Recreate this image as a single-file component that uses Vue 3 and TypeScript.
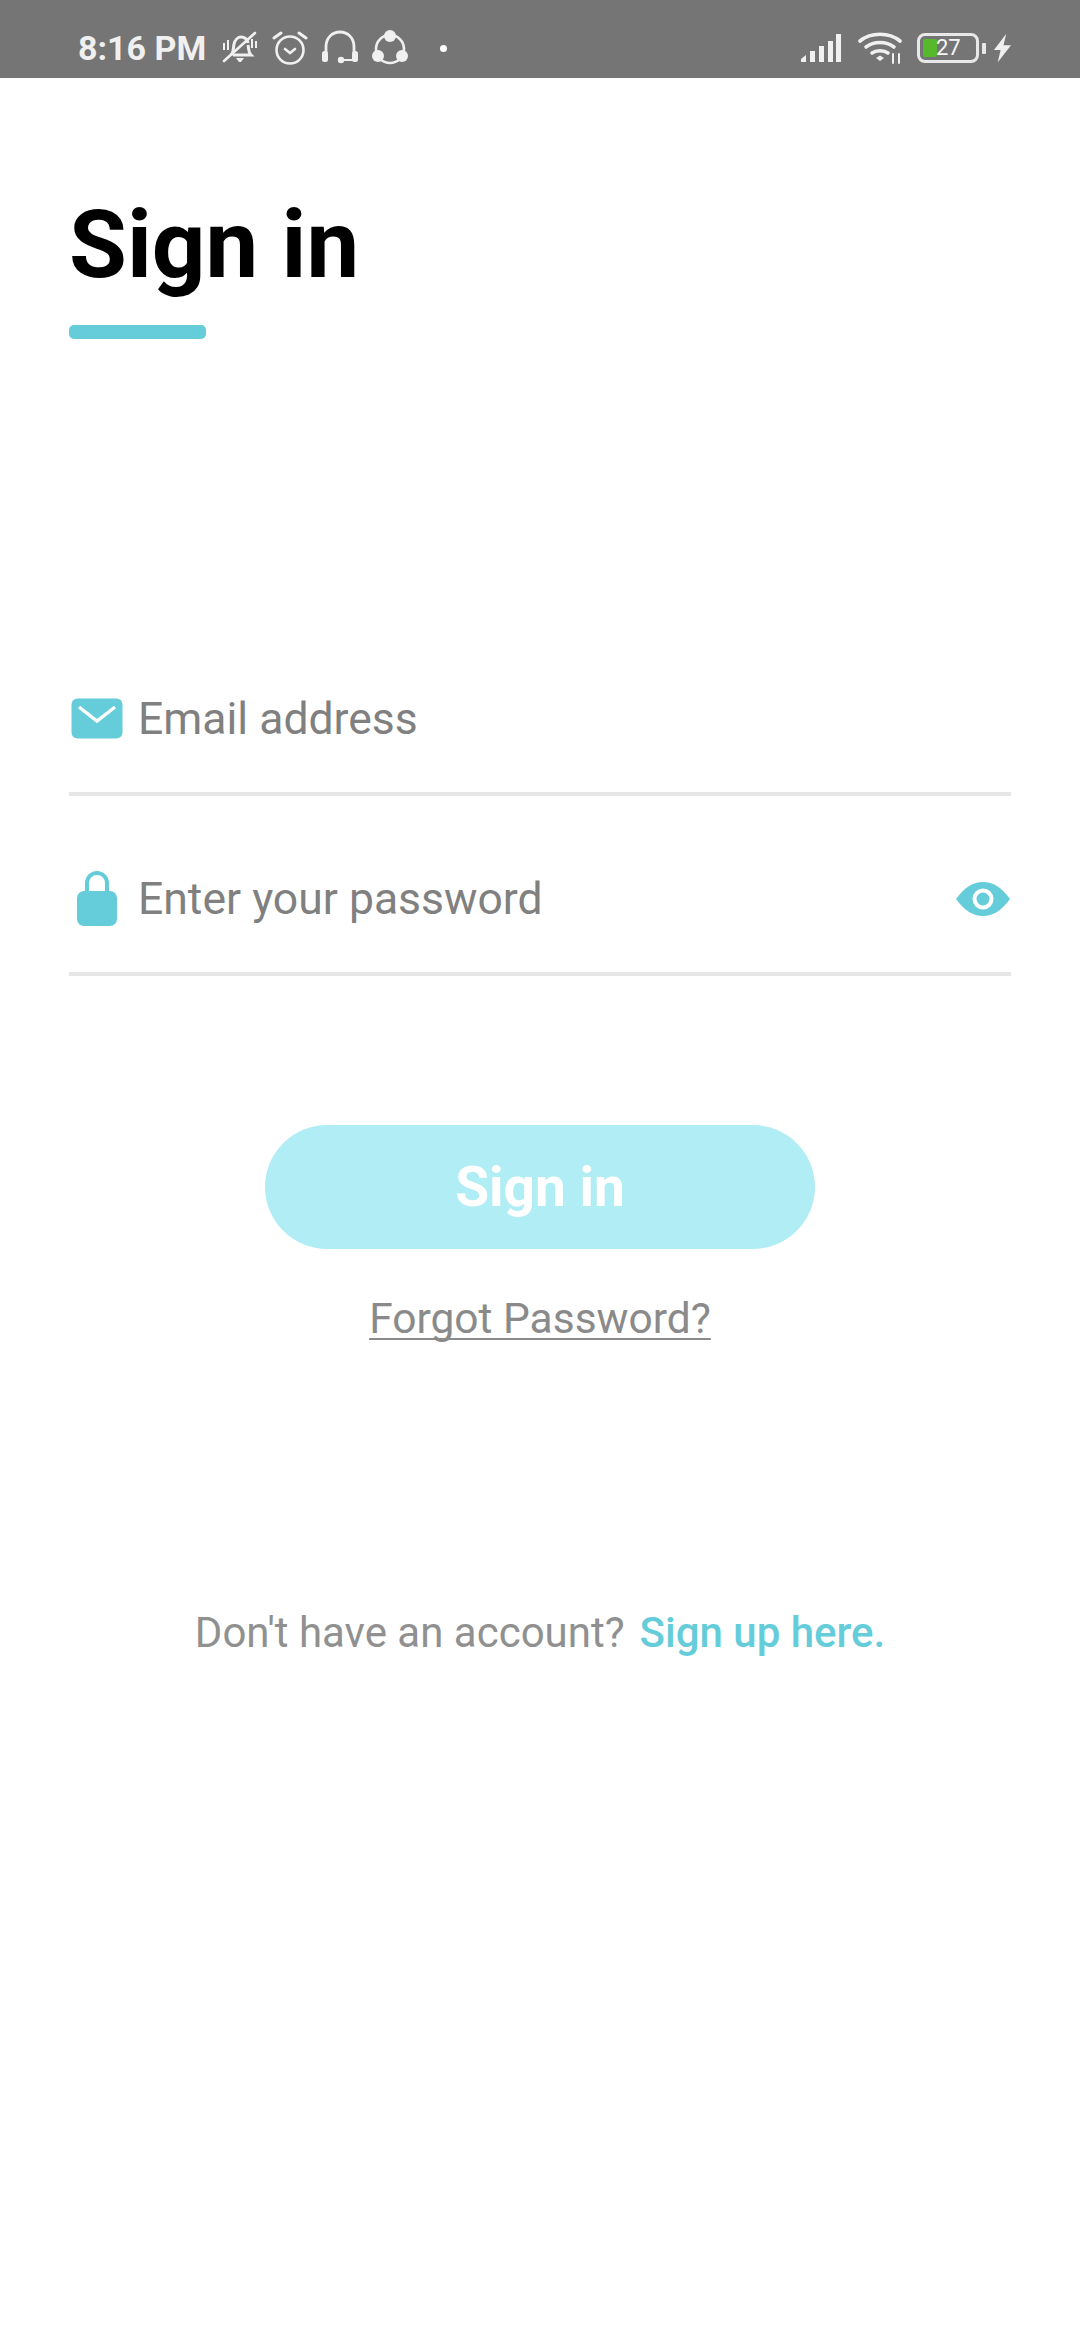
<template>
  <div class="screen">
    <header class="status-bar">
      <div class="status-left">
        <span class="time">8:16 PM</span>
        <svg class="st bell" viewBox="0 0 36 36" fill="none" stroke="#f0f0f0">
          <path d="M9 25c3-3 2-6 3-11 1-4 4-7 7-7s6 2 7 6M26 15c1 4 0 7 3 10H11" stroke-width="3" />
          <path d="M2 31 33 3" stroke-width="2.6" stroke-linecap="round" />
          <path d="M14 28h8l-3 4h-2z" fill="#f0f0f0" stroke="none" />
          <path d="M2 13v7M6 10v10M34 11v7M30 9v9" stroke-width="2" />
        </svg>
        <svg class="st alarm" viewBox="0 0 36 36" fill="none" stroke="#f0f0f0" stroke-width="2.6" stroke-linecap="round">
          <circle cx="18" cy="20" r="13.5" />
          <path d="M2 8l7-5M34 8l-7-5" stroke-width="3" />
          <path d="M13 19l5 4 5-4" />
        </svg>
        <svg class="st headset" viewBox="0 0 36 36" fill="none" stroke="#f0f0f0" stroke-width="2.8" stroke-linecap="round">
          <path d="M4 22V17C4 8 10 2 18 2s14 6 14 15v5" />
          <rect x="0" y="21" width="6" height="11" rx="2.5" fill="#f0f0f0" stroke="none" />
          <rect x="30" y="21" width="6" height="11" rx="2.5" fill="#f0f0f0" stroke="none" />
          <path d="M20 30h11" stroke-width="2" />
          <circle cx="19" cy="30" r="3.2" fill="#f0f0f0" stroke="none" />
        </svg>
        <svg class="st share" viewBox="0 0 36 36" fill="none" stroke="#f0f0f0" stroke-width="2.6">
          <circle cx="18" cy="19" r="14" />
          <circle cx="18" cy="6" r="6" fill="#f0f0f0" stroke="none" />
          <circle cx="6" cy="26" r="6" fill="#f0f0f0" stroke="none" />
          <circle cx="30" cy="26" r="6" fill="#f0f0f0" stroke="none" />
        </svg>
        <span class="dot"></span>
      </div>
      <div class="status-right">
        <svg class="signal" viewBox="0 0 42 30" fill="#f0f0f0">
          <path d="M1 26l5-4v7H1zM10 18h5v11h-5zM19 13h5v16h-5zM28 8h5v21h-5zM36 1h5v28h-5z" />
        </svg>
        <svg class="wifi" viewBox="0 0 44 32" fill="none" stroke="#f0f0f0" stroke-linecap="round">
          <path d="M2 9c11-9 29-9 40 0" stroke-width="3.6" />
          <path d="M8 15c8-6 20-6 28 0" stroke-width="3.6" />
          <path d="M14 21c4-3 12-3 16 0" stroke-width="3.6" />
          <path d="M18 26l4-2.5 4 2.5-4 3z" fill="#f0f0f0" stroke="none" />
          <path d="M35 22v9M41 22v9" stroke-width="2" />
        </svg>
        <div class="battery">
          <span class="battery-fill"></span>
          <span class="battery-num">27</span>
        </div>
        <span class="battery-tip"></span>
        <svg class="bolt" viewBox="0 0 20 30" fill="#f0f0f0">
          <path d="M14 0 1 17h7L5 30l14-18h-8z" />
        </svg>
      </div>
    </header>

    <main class="content">
      <h1>Sign in</h1>
      <div class="title-bar"></div>

      <form class="fields" @submit.prevent>
        <label class="field">
          <svg class="field-icon" viewBox="0 0 52 42">
            <rect x="0.5" y="0.5" width="51" height="40" rx="6" fill="#65ccd9" />
            <path d="M8 9l18 14L44 9" fill="none" stroke="#fff" stroke-width="3.4" />
          </svg>
          <span class="placeholder">Email address</span>
        </label>
        <label class="field">
          <svg class="field-icon" viewBox="0 0 52 56">
            <path d="M16 24V12a10 10 0 0 1 20 0v12" fill="none" stroke="#65ccd9" stroke-width="4" />
            <rect x="6" y="20" width="40" height="35" rx="7" fill="#65ccd9" />
          </svg>
          <span class="placeholder">Enter your password</span>
          <svg class="eye" viewBox="0 0 56 36">
            <path d="M1 18C10 6 18 1 28 1s18 5 27 17c-9 12-17 17-27 17S10 30 1 18z" fill="#65ccd9" />
            <circle cx="28" cy="18" r="8.5" fill="none" stroke="#fff" stroke-width="4" />
          </svg>
        </label>
      </form>

      <button class="submit" type="button">Sign in</button>
      <a class="forgot">Forgot Password?</a>

      <p class="signup">
        <span>Don't have an account?</span>
        <a>Sign up here.</a>
      </p>
    </main>
  </div>
</template>

<script setup lang="ts">
</script>

<style>
html,
body {
  margin: 0;
  background: #ffffff;
}
</style>

<style scoped>
.screen {
  width: 1080px;
  height: 2340px;
  overflow: hidden;
  background: #ffffff;
  font-family: Roboto, sans-serif;
}

.status-bar {
  height: 78px;
  box-sizing: border-box;
  padding: 18px 68px 0 78px;
  display: flex;
  align-items: center;
  justify-content: space-between;
  background: #757575;
}

.status-left,
.status-right {
  display: flex;
  align-items: center;
}

.time {
  color: #f0f0f0;
  font: 700 34px/1 Roboto, sans-serif;
  margin-right: 16px;
}

.st {
  width: 36px;
  height: 36px;
  margin-right: 14px;
}

.dot {
  width: 7px;
  height: 7px;
  margin-left: 18px;
  border-radius: 50%;
  background: #ffffff;
}

.signal {
  width: 42px;
  height: 30px;
  margin-right: 16px;
}

.wifi {
  width: 44px;
  height: 32px;
  margin-right: 15px;
}

.battery {
  position: relative;
  width: 62px;
  height: 30px;
  border: 3px solid #e8e8e8;
  border-radius: 8px;
  box-sizing: border-box;
}

.battery-fill {
  position: absolute;
  left: 3px;
  top: 3px;
  width: 14px;
  height: 18px;
  border-radius: 2px;
  background: #58b82c;
}

.battery-num {
  position: absolute;
  left: 16px;
  top: 2px;
  color: #f5f5f5;
  font: 22px/20px Roboto, sans-serif;
}

.battery-tip {
  width: 4px;
  height: 11px;
  margin: 0 7px 0 3px;
  background: #e8e8e8;
  border-radius: 1px;
}

.bolt {
  width: 19px;
  height: 30px;
}

.content {
  padding: 0 69px;
  display: flex;
  flex-direction: column;
}

h1 {
  margin: 120px 0 0;
  color: #000000;
  font: 700 94px/1 Roboto, sans-serif;
}

.title-bar {
  width: 137px;
  height: 14px;
  margin-top: 33px;
  border-radius: 5px;
  background: #65ccd9;
}

.fields {
  margin-top: 307px;
  display: flex;
  flex-direction: column;
  gap: 30px;
}

.field {
  height: 150px;
  box-sizing: border-box;
  display: flex;
  align-items: center;
  border-bottom: 4px solid #e6e6e6;
}

.field-icon {
  width: 52px;
  height: 56px;
  margin: 0 15px 0 2px;
  flex-shrink: 0;
}

.placeholder {
  flex: 1;
  color: #808080;
  font: 400 44.5px/1 Roboto, sans-serif;
}

.eye {
  width: 56px;
  height: 36px;
}

.submit {
  align-self: center;
  width: 550px;
  height: 124px;
  margin-top: 149px;
  border: 0;
  border-radius: 62px;
  background: #b1edf5;
  color: #ffffff;
  font: 700 55px/1 Roboto, sans-serif;
}

.forgot {
  align-self: center;
  margin-top: 47px;
  color: #8a8a8a;
  font: 400 42.5px/1.1 Roboto, sans-serif;
  text-decoration: underline;
  text-decoration-thickness: 2px;
  text-decoration-skip-ink: none;
  text-underline-offset: 5px;
}

.signup {
  margin: 267px 0 0;
  display: flex;
  justify-content: center;
  gap: 15px;
  color: #909090;
  font: 400 42px/1.1 Roboto, sans-serif;
}

.signup a {
  color: #65ccd9;
  font-weight: 500;
}
</style>
